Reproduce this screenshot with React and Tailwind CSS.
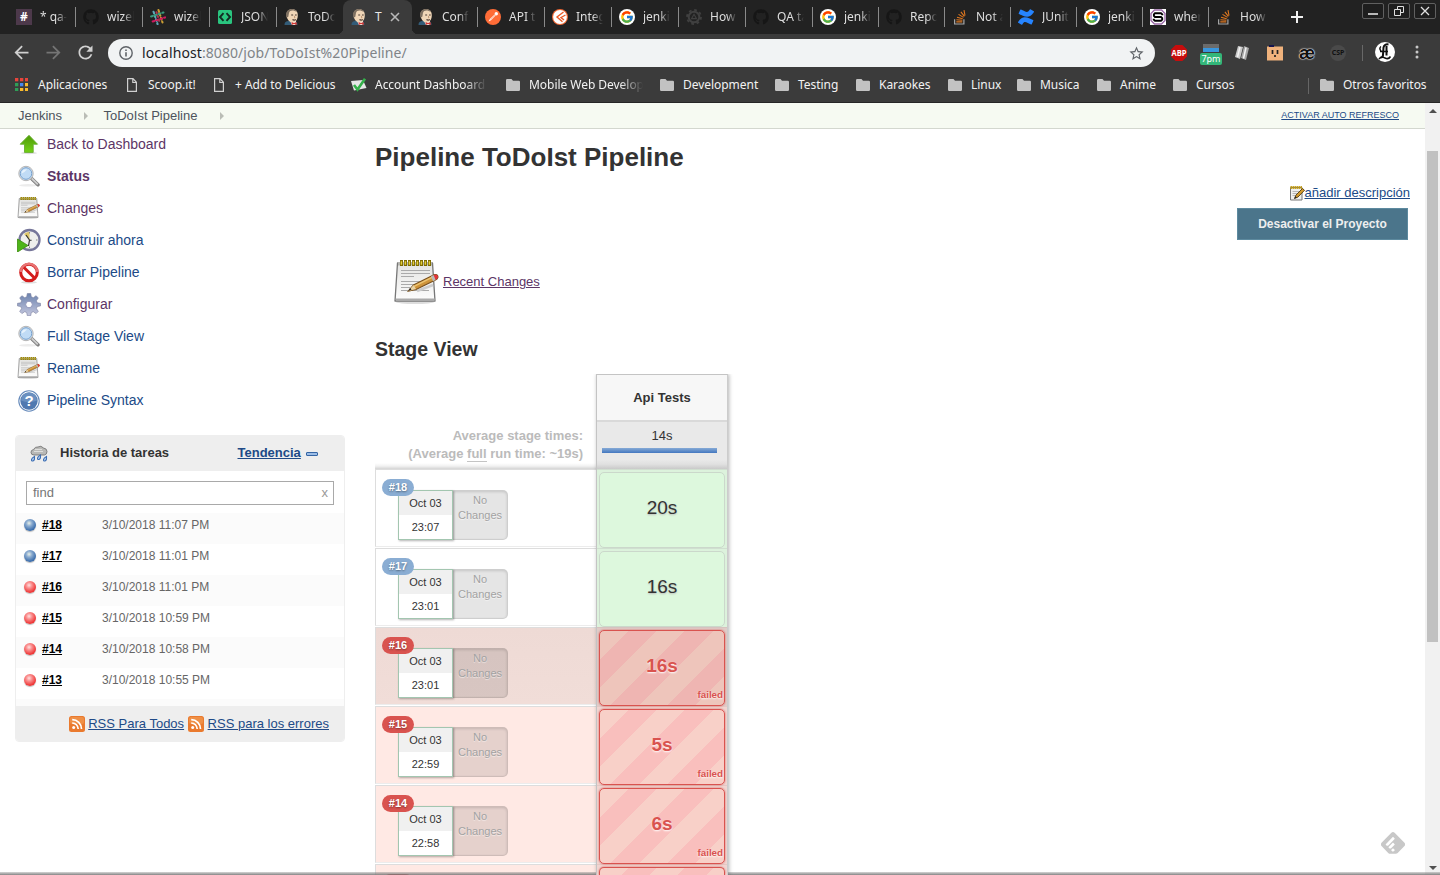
import React from "react";
import { FaGithub } from "react-icons/fa";
import { FcGoogle } from "react-icons/fc";
import { SiConfluence, SiFeedly } from "react-icons/si";

/* ---------- favicons ---------- */

const HashIcon = () => (
  <span className="flex size-4 items-center justify-center bg-[#4d394b] text-[12px] font-bold leading-4 text-white">#</span>
);

const GithubIcon = () => <FaGithub className="size-4 text-[#161616]" />;

const SlackIcon = () => (
  <svg viewBox="0 0 16 16" className="size-4">
    <g transform="rotate(-18 8 8)" strokeWidth="2.1" strokeLinecap="round" strokeDasharray="1.8 2.2">
      <path d="M5.4 1.6v13" stroke="#5aa9b8" />
      <path d="M10.6 1.6v13" stroke="#c99c33" />
      <path d="M1.6 5.400h13" stroke="#3a9b7c" />
      <path d="M1.6 10.600h13" stroke="#d01a5e" />
      <path d="M8 3v10" stroke="#a8374f" strokeDasharray="1 3" />
    </g>
  </svg>
);

const JsonIcon = () => (
  <svg viewBox="0 0 16 16" className="size-4">
    <rect x="1" y="1" width="14" height="14" rx="1.5" fill="#2ac57f" />
    <path d="M6.5 4.2L3 8l3.5 3.8M9.500 4.200L13 8l-3.500 3.800" stroke="#132a22" strokeWidth="1.900" fill="none" />
  </svg>
);

const JenkinsIcon = () => (
  <svg viewBox="0 0 16 16" className="size-4">
    <path d="M.5 16c0-3 1.500-4 4-4h6c2 0 3 1.500 3 4z" fill="#335c78" />
    <path d="M6 12l2 4h3.500l.5-4z" fill="#f4f1ea" />
    <path d="M2.500 5.500C2.500 2 5 .3 8.300.3c3.500 0 5.500 2.300 5.500 6 0 4-1.800 7.200-5.300 7.200C4.900 13.500 2.500 9.500 2.500 5.500z" fill="#f0d6b7" />
    <path d="M2.400 8.500C1.200 4 3.200.2 8 .1c2.400 0 4.300 1 5.200 3C10.800 1.500 8 .9 6.200 2 4.600 3 5 5.500 4.200 8z" fill="#7d6f60" />
    <path d="M7.200 6h1.900M11 6h1.700M8.500 10.500c1 .8 2.300.7 3.300 0" stroke="#4a3a32" strokeWidth="1.100" fill="none" />
    <path d="M10.200 6.800l.8 1.700-1 .3" stroke="#b88a66" strokeWidth=".8" fill="none" />
    <path d="M7.500 13l2.500 1 2.500-1 .4 3-2.900-1-2.200 1z" fill="#d33833" />
  </svg>
);

const PostmanIcon = () => (
  <svg viewBox="0 0 16 16" className="size-4">
    <circle cx="8" cy="8" r="8" fill="#ff6c37" />
    <path d="M3.500 12.600l1.400-2.700 4.700-4.400 1.100 1.100-4.600 4.600z" fill="#fff" />
    <circle cx="11.300" cy="4.700" r="1.700" fill="#fff" />
    <path d="M5.500 10.800l4.800-4.700" stroke="#ff6c37" strokeWidth=".6" />
  </svg>
);

const IntegIcon = () => (
  <svg viewBox="0 0 16 16" className="size-4">
    <circle cx="8" cy="8" r="8" fill="#f26a36" />
    <circle cx="8" cy="8" r="6.900" fill="#fff" />
    <path d="M11.500 3L5 8l5.500 4.800M13.500 6L9 8.500l3 2.500" stroke="#ee5a24" strokeWidth="1.400" fill="none" />
  </svg>
);

const GoogleIcon = () => (
  <span className="flex size-4 items-center justify-center rounded-full bg-white">
    <FcGoogle className="size-[14px]" />
  </span>
);

const GearTriangleIcon = () => (
  <svg viewBox="0 0 16 16" className="size-4" fill="none" stroke="#404040">
    <circle cx="8" cy="8" r="7" strokeWidth="1.800" strokeDasharray="2.700 2.798" />
    <circle cx="8" cy="8" r="5.300" strokeWidth="2" />
    <path d="M8 5.300l2.500 4.300h-5z" strokeWidth="1.100" />
  </svg>
);

const StackIcon = () => (
  <svg viewBox="0 0 16 16" className="size-4" fill="none">
    <path d="M2.600 10.200V15h9.300v-4.800" stroke="#a5a5a5" strokeWidth="1.200" />
    <path d="M4.300 12.900h6M4.400 10.700l6 .6M5 8.300l5.700 1.500M6.500 5.400l5 3M8.900 2.900l3.500 4.500M12 1.200l1 5.300" stroke="#e07820" strokeWidth="1.100" />
  </svg>
);

const ConfluenceIcon = () => <SiConfluence className="size-4 text-[#2684ff]" />;

const SIcon = () => (
  <svg viewBox="0 0 16 16" className="size-4">
    <rect width="16" height="16" fill="#fff" />
    <path d="M4.500 1h7L15 4.500v7L11.500 15h-7L1 11.500v-7z" fill="#fff" stroke="#9b6aa8" strokeWidth="1.400" />
    <path d="M12.300 6.300V5.500l-1.300-1.300H5L3.900 5.300v1.500L5 8h6l1.200 1.200v1.500L11 11.800H5l-1.300-1.300v-.8" fill="none" stroke="#000" strokeWidth="1.900" />
  </svg>
);

/* ---------- browser chrome ---------- */

const tabs = [
  { t: "* qa-c", I: HashIcon },
  { t: "wizeli", I: GithubIcon },
  { t: "wizeli", I: SlackIcon },
  { t: "JSON", I: JsonIcon },
  { t: "ToDo", I: JenkinsIcon, noSep: true },
  { t: "T", I: JenkinsIcon, active: true },
  { t: "Confi", I: JenkinsIcon },
  { t: "API te", I: PostmanIcon },
  { t: "Integ", I: IntegIcon },
  { t: "jenkin", I: GoogleIcon },
  { t: "How", I: GearTriangleIcon },
  { t: "QA ta", I: GithubIcon },
  { t: "jenkin", I: GoogleIcon, small: true },
  { t: "Repo", I: GithubIcon, small: true },
  { t: "Not a", I: StackIcon, small: true },
  { t: "JUnit", I: ConfluenceIcon, small: true },
  { t: "jenkin", I: GoogleIcon, small: true },
  { t: "wher", I: SIcon, small: true },
  { t: "How", I: StackIcon, small: true, noSep: true },
];

function Tab({ t, I, active, small, noSep }) {
  if (active)
    return (
      <div className="relative flex h-[34px] w-[67px] shrink-0 items-center pl-[7px]">
        <div className="absolute inset-y-0 -left-px w-[69px] rounded-t-[8px] bg-[#3b3b3b]" />
        <div className="absolute bottom-0 -left-[7px] size-[6px] bg-[radial-gradient(circle_at_0_0,#222_6px,#3b3b3b_6.5px)]" />
        <div className="absolute bottom-0 -right-[7px] size-[6px] bg-[radial-gradient(circle_at_100%_0,#222_6px,#3b3b3b_6.5px)]" />
        <div className="relative"><I /></div>
        <div className="relative ml-2 w-[8px] whitespace-nowrap text-[12px] text-[#e8e8e8]">{t}</div>
        <svg viewBox="0 0 10 10" className="relative ml-[7px] size-[10px]" stroke="#b8b8b8" strokeWidth="1.600">
          <path d="M1 1l8 8M9 1L1 9" />
        </svg>
      </div>
    );
  return (
    <div className={`flex h-[34px] shrink-0 items-center pl-[7px] ${small ? "w-[66px]" : "w-[67px]"}`}>
      <I />
      <div className="ml-2 w-[28px] overflow-hidden whitespace-nowrap text-[12px] text-[#dedede] [mask-image:linear-gradient(to_right,#000_60%,transparent_96%)]">{t}</div>
      {!noSep && <div className="ml-auto h-5 w-px bg-[#8a8a8a]" />}
    </div>
  );
}

const WinButton = ({ children }) => (
  <div className="flex h-[16px] w-[22px] items-center justify-center rounded-[2px] border border-[#606060] bg-[#1e1e1e]">
    <svg viewBox="0 0 12 12" className="size-3" fill="none" stroke="#e0e0e0" strokeWidth="1.300">{children}</svg>
  </div>
);

const TabStrip = () => (
  <div className="flex h-[34px] shrink-0 bg-[#222] pl-[9px]">
    {tabs.map((tab, i) => <Tab key={i} {...tab} />)}
    <svg viewBox="0 0 12 12" className="ml-[16px] mt-[11px] size-3" stroke="#f0f0f0" strokeWidth="2"><path d="M6 0v12M0 6h12" /></svg>
    <div className="ml-auto mr-[4px] mt-[3px] flex gap-[4px]">
      <WinButton><path d="M1 9h10" strokeWidth="1.600" /></WinButton>
      <WinButton><path d="M1.500 4.500h6v6h-6zM4.500 4.500v-3h6v6h-3" strokeWidth="1" /></WinButton>
      <WinButton><path d="M2 2l8 8M10 2l-8 8" /></WinButton>
    </div>
  </div>
);

const NavIcon = ({ d, dim }) => (
  <svg viewBox="0 0 24 24" className={`size-[21px] ${dim ? "text-[#757575]" : "text-[#d0d0d0]"}`} fill="currentColor"><path d={d} /></svg>
);

const Toolbar = () => (
  <div className="flex h-[33px] shrink-0 items-center bg-[#3b3b3b] pl-[11px] pt-[5px]">
    <div className="-mt-[2px] flex gap-[11px]">
      <NavIcon d="M20 11H7.830l5.590-5.590L12 4l-8 8 8 8 1.410-1.410L7.830 13H20v-2z" />
      <NavIcon dim d="M12 4l-1.410 1.410L16.170 11H4v2h12.170l-5.580 5.590L12 20l8-8z" />
      <NavIcon d="M17.650 6.350C16.200 4.900 14.210 4 12 4c-4.420 0-7.990 3.580-7.990 8s3.570 8 7.990 8c3.730 0 6.840-2.550 7.730-6h-2.080c-.82 2.330-3.040 4-5.650 4-3.310 0-6-2.690-6-6s2.690-6 6-6c1.660 0 3.140.69 4.220 1.780L13 11h7V4l-2.350 2.350z" />
    </div>
    <div className="ml-[12px] flex h-[28px] w-[1047px] shrink-0 items-center rounded-full bg-[#f1f3f4] pl-[11px] pr-[10px]">
      <svg viewBox="0 0 14 14" className="size-[14px]" fill="none" stroke="#5f6368" strokeWidth="1.400">
        <circle cx="7" cy="7" r="6.200" /><path d="M7 6.200v4.300M7 3.500v1.500" strokeWidth="1.600" />
      </svg>
      <div className="ml-[9px] -mt-px whitespace-nowrap text-[14px] tracking-[0.08px] text-[#808488]"><span className="text-[#202124]">localhost</span>:8080/job/ToDoIst%20Pipeline/</div>
      <svg viewBox="0 0 24 24" className="ml-auto size-[17px]" fill="#5f6368">
        <path d="M22 9.240l-7.190-.62L12 2 9.190 8.630 2 9.240l5.460 4.730L5.820 21 12 17.270 18.180 21l-1.630-7.030L22 9.240zM12 15.400l-3.760 2.270 1-4.280-3.320-2.880 4.380-.38L12 6.100l1.710 4.040 4.380.38-3.320 2.880 1 4.280L12 15.400z" />
      </svg>
    </div>
    <div className="ml-[15px] flex h-full items-center">
      <svg viewBox="0 0 18 18" className="size-[18px]">
        <path d="M5.600 1h6.800L17 5.600v6.800L12.400 17H5.600L1 12.400V5.600z" fill="#c70d0d" />
        <text x="9" y="12" fontSize="8" fontWeight="bold" fill="#fff" textAnchor="middle" fontFamily="Open Sans" textLength="15" lengthAdjust="spacingAndGlyphs">ABP</text>
      </svg>
      <div className="ml-[12px] mt-[3px] flex w-[22px] flex-col items-center">
        <div className="h-[4px] w-4 bg-[#6b6b6b]" />
        <div className="h-[4px] w-4 bg-[#3a96dd]" />
        <div className="mt-px h-[12px] w-[22px] rounded-[2px] bg-[#33b679] text-center text-[9px] leading-[12px] text-white">7pm</div>
      </div>
      <svg viewBox="0 0 16 16" className="ml-[12px] size-[16px]">
        <path d="M4 1l5 1-3 12-5-2z" fill="#c9c9c9" /><path d="M10 1l5 2-3 12-5-2z" fill="#a5a5a5" /><path d="M6 2L3.500 12M12 2.500l-2.500 11" stroke="#f2f2f2" strokeWidth="1.500" />
      </svg>
      <svg viewBox="0 0 16 16" className="ml-[17px] size-[16px]">
        <rect y="1.500" width="16" height="14" fill="#f0b27c" /><path d="M2 0h5v2H2z" fill="#15154f" /><path d="M5.500 5v4M10.500 5v4M8 10v2" stroke="#222" strokeWidth="1.700" />
      </svg>
      <div className="ml-[14px] w-[20px] text-center font-['Liberation_Sans'] text-[18px] font-bold leading-[20px] text-[#111] [text-shadow:0_0_1px_#fff,0_0_1px_#fff,0_0_2px_#fff]">æ</div>
      <div className="ml-[13px] flex size-[16px] items-center justify-center rounded-full bg-[#4a4a4a] text-[7px] font-bold text-[#111]">CSP</div>
      <div className="ml-[16px] h-[16px] w-px bg-[#686868]" />
      <svg viewBox="0 0 20 20" className="ml-[12px] -mt-[2px] size-[20px]">
        <circle cx="10" cy="10" r="10" fill="#fff" />
        <path d="M13.500 2.500C11 2 9 3 8.500 5.500L8 13c0 1.500-1 2.500-2.500 2.500M11.500 4v9.500" stroke="#111" strokeWidth="2" fill="none" />
        <path d="M4 17c2-3 4-2 6-1s4 1 5.500-1.500M6 4.500c-1.500 1-1.500 3 0 4.500M5 9.500h8" stroke="#111" strokeWidth="1.500" fill="none" />
      </svg>
      <svg viewBox="0 0 4 14" className="ml-[20px] h-[14px] w-1 -mt-[2px]" fill="#c8c8c8"><circle cx="2" cy="2" r="1.500" /><circle cx="2" cy="7" r="1.500" /><circle cx="2" cy="12" r="1.500" /></svg>
    </div>
  </div>
);

const AppsIcon = () => (
  <svg viewBox="0 0 13 13" className="mr-[10px] size-[13px] shrink-0">
    {[["#e8453c", 0, 0], ["#e8453c", 5, 0], ["#e8453c", 10, 0], ["#2f9e57", 0, 5], ["#4688f1", 5, 5], ["#f9bb2d", 10, 5], ["#2f9e57", 0, 10], ["#f9bb2d", 5, 10], ["#f9bb2d", 10, 10]].map(([c, x, y]) => (
      <rect key={`${x}-${y}`} x={x} y={y} width="3.300" height="3.300" fill={c} />
    ))}
  </svg>
);
const PageIcon = () => (
  <svg viewBox="0 0 10 14" className="mr-[11px] h-[14px] w-[10px] shrink-0" fill="none" stroke="#d0d0d0" strokeWidth="1.200">
    <path d="M.6.600h5.400l3.400 3.700v9.100H.600zM5.800.600v3.900h3.600" />
  </svg>
);
const FolderIcon = () => (
  <svg viewBox="0 0 14 12" className="mr-[9px] h-3 w-[14px] shrink-0" fill="#c2c2c2"><path d="M1.200 0h4.300L7 1.700h5.800Q14 1.700 14 2.900v7.900Q14 12 12.800 12H1.200Q0 12 0 10.800V1.200Q0 0 1.200 0z" /></svg>
);
const CheckIcon = () => (
  <svg viewBox="0 0 16 14" className="mr-[8px] h-[14px] w-4 shrink-0">
    <path d="M0 3l12-1 3.500 8L3 12.500z" fill="#e6e6e6" /><path d="M3 7l3.500 4.500L14 .8" stroke="#34b04a" strokeWidth="2.600" fill="none" />
  </svg>
);

const bookmarks = [
  { t: "Aplicaciones", I: AppsIcon, w: "w-[112px]" },
  { t: "Scoop.it!", I: PageIcon, w: "w-[87px]" },
  { t: "+ Add to Delicious", I: PageIcon, w: "w-[137px]" },
  { t: "Account Dashboard", I: CheckIcon, w: "w-[155px]", fade: "w-[112px]" },
  { t: "Mobile Web Develop", I: FolderIcon, w: "w-[154px]", fade: "w-[114px]" },
  { t: "Development", I: FolderIcon, w: "w-[115px]" },
  { t: "Testing", I: FolderIcon, w: "w-[81px]" },
  { t: "Karaokes", I: FolderIcon, w: "w-[92px]" },
  { t: "Linux", I: FolderIcon, w: "w-[69px]" },
  { t: "Musica", I: FolderIcon, w: "w-[80px]" },
  { t: "Anime", I: FolderIcon, w: "w-[76px]" },
  { t: "Cursos", I: FolderIcon, w: "w-[80px]" },
];

const BookmarksBar = () => (
  <div className="flex h-[36px] shrink-0 items-center border-b border-[#262626] bg-[#3b3b3b] pl-[15px] text-[12px] tracking-[-0.04px] text-[#f2f2f2]">
    {bookmarks.map(({ t, I, w, fade }) => (
      <div key={t} className={`flex shrink-0 items-center whitespace-nowrap ${w}`}>
        <I />
        <span className={fade ? `overflow-hidden [mask-image:linear-gradient(to_right,#000_80%,transparent)] ${fade}` : ""}>{t}</span>
      </div>
    ))}
    <div className="ml-[55px] mt-[3px] h-4 w-px bg-[#666]" />
    <div className="ml-[11px] flex items-center whitespace-nowrap"><FolderIcon />Otros favoritos</div>
  </div>
);

/* ---------- Jenkins icons ---------- */

const UpIcon = () => (
  <svg viewBox="0 0 24 24" className="size-6">
    <defs><linearGradient id="up" x1="0" y1="0" x2="0" y2="1"><stop offset="0" stopColor="#4e9a06" /><stop offset="1" stopColor="#73d216" /></linearGradient></defs>
    <ellipse cx="12" cy="21" rx="8" ry="1.200" fill="#ddd" />
    <path d="M12 3.300l8.500 8.900h-4.300v8.200H7.500v-8.200H3.200z" fill="url(#up)" stroke="#65ad2d" strokeWidth=".9" />
  </svg>
);
const SearchIcon = () => (
  <svg viewBox="0 0 24 24" className="size-6">
    <ellipse cx="11" cy="21.300" rx="9" ry="1.300" fill="#ececec" />
    <path d="M14.500 14.500l6.500 6.200" stroke="#808080" strokeWidth="3.600" strokeLinecap="round" />
    <path d="M14.800 14.500l6 5.800" stroke="#cdcdcd" strokeWidth="1.800" />
    <circle cx="9" cy="9.500" r="7.200" fill="#e2e8ee" stroke="#b5b5b5" strokeWidth="1" />
    <circle cx="9" cy="9.500" r="5.800" fill="#c0dbf5" stroke="#739fcd" strokeWidth="1" />
    <path d="M4.500 9.500c0-3 2.500-4.500 5.500-4.300C8 7.500 7 8.500 4.500 9.500z" fill="#e6f2fc" />
  </svg>
);
const NotepadIcon = ({ className = "size-6" }) => (
  <svg viewBox="0 0 48 48" className={className}>
    <defs><linearGradient id="pad" x1="0" y1="0" x2="0" y2="1"><stop offset="0" stopColor="#e4e4e2" /><stop offset="1" stopColor="#fdfdfd" /></linearGradient></defs>
    <ellipse cx="22" cy="44" rx="19" ry="2" fill="#ddd" />
    <path d="M4.500 5h35l2.500 38H2z" fill="url(#pad)" stroke="#777" strokeWidth="1.300" strokeLinejoin="round" />
    <path d="M3 40.500h38.500v2.500H3z" fill="#aaa" />
    <path d="M5 4h34v3.500H5z" fill="#b5b5b0" />
    <path d="M7 5h32" stroke="#7c6a00" strokeWidth="5.800" strokeDasharray="3 1" />
    <path d="M7.700 5h31" stroke="#e5ce3d" strokeWidth="3.600" strokeDasharray="1.400 2.600" />
    <path d="M8 12.500h29M8 15.500h29M8 18.500h13M8 23.500h28M8 26.500h20M8 29.500h9M8 32.500h28" stroke="#aaa" strokeWidth="1.100" />
    <path d="M24 33l16-6" stroke="#ccc" strokeWidth="2.500" />
    <path d="M15.500 33l5-6L41 16.800q3.500-1 4 2.200-.5 2-2.500 3L23 31.500z" fill="#cf943a" stroke="#7a5220" strokeWidth="1.200" />
    <path d="M21 28.300L40 18.800" stroke="#edc572" strokeWidth="1.300" />
    <path d="M15.500 33l5-6 2.500 4z" fill="#e9d3a4" /><path d="M15.500 33l3-1.500-1.500-1.500z" fill="#222" />
    <path d="M40.500 17q4-1.500 4.500 2-.5 2-2.500 3z" fill="#e4333a" /><path d="M38 18.300l2.500-1.300 2 5-2.500 1.200z" fill="#b9b9b9" />
  </svg>
);
const EditIcon = () => (
  <svg viewBox="0 0 16 16" className="size-4">
    <path d="M1.500 2.500h11.500v12.500H1.500z" fill="#efefed" stroke="#777" />
    <path d="M1.500 2.500h11.500" stroke="#c19a10" strokeWidth="3.200" strokeDasharray="1.400 .6" />
    <path d="M3.500 6.500h7M3.500 8.500h5M3.500 10.500h3" stroke="#aaa" strokeWidth=".8" />
    <path d="M5.500 13.500l1.500-3.500 6.500-6.500 2 1.800L9 12z" fill="#d49b2e" stroke="#503a10" strokeWidth=".9" />
    <path d="M5.300 13.800l1-2.500 1.600 1.300z" fill="#222" />
  </svg>
);
const ClockIcon = () => (
  <svg viewBox="0 0 24 24" className="size-6">
    <circle cx="12.500" cy="12" r="10" fill="#efefec" stroke="#77779a" strokeWidth="2.300" />
    <path d="M12.500 12L7 6Q9 4 12.500 3.800z" fill="#dfc76b" />
    <path d="M12.500 12l-3.500-5M12.500 12l-1 6M12.500 12l2 .3" stroke="#333" strokeWidth="1.200" />
    <path d="M12.500 4v1.500M12.500 18.500V20M19 12h1.500" stroke="#888" />
    <path d="M.5 11v13L11 17.500z" fill="#4eb51a" stroke="#3b8b0c" strokeWidth=".8" />
  </svg>
);
const StopIcon = () => (
  <svg viewBox="0 0 24 24" className="size-6">
    <ellipse cx="12" cy="22.300" rx="8" ry="1.200" fill="#ddd" />
    <circle cx="12" cy="12.500" r="8.300" fill="#fff" stroke="#d41c1c" strokeWidth="3" />
    <path d="M6.500 7l11 11" stroke="#d41c1c" strokeWidth="3" />
    <path d="M3.700 12a8.300 8.300 0 0 1 16.600 0" stroke="#e87474" strokeWidth="2.400" fill="none" />
  </svg>
);
const GearIcon = () => (
  <svg viewBox="0 0 24 24" className="size-6">
    <defs><linearGradient id="gear" x1="0" y1="0" x2="0" y2="1"><stop offset="0" stopColor="#6c83ae" /><stop offset="1" stopColor="#c5c7de" /></linearGradient></defs>
    <path transform="translate(0 .5)" fill="url(#gear)" stroke="#7a7fa0" strokeWidth=".6" d="M10.300 1h3.400l.6 3.300 2 .9 2.800-2 2.200 2.300-1.900 2.800.8 2 3.300.5v2.600l-3.300.7-.8 2 1.900 2.800-2.200 2.200-2.800-1.900-2 .8-.6 3.200h-3.400l-.6-3.200-2-.8-2.800 1.900-2.200-2.200 1.900-2.800-.8-2L.5 13.400v-2.600l3.300-.5.8-2-1.900-2.800 2.200-2.300 2.800 2 2-.9z" />
    <circle cx="12" cy="12.500" r="3.300" fill="#fff" stroke="#8a8fb5" strokeWidth=".9" />
  </svg>
);
const HelpIcon = () => (
  <svg viewBox="0 0 24 24" className="size-6">
    <circle cx="12" cy="13" r="10.200" fill="#fff" stroke="#6489ba" strokeWidth="1.100" />
    <circle cx="12" cy="13" r="8.700" fill="#5079b0" />
    <path d="M4 12.500a8 8 0 0 1 16 0q-8 3-16 0z" fill="#7ba0cc" opacity=".6" />
    <text x="12" y="18.300" fontSize="15" fontWeight="bold" fontFamily="Liberation Sans" textAnchor="middle" fill="#fff">?</text>
  </svg>
);
const RainIcon = () => (
  <svg viewBox="0 0 18 18" className="size-[18px]">
    <path d="M4 10Q1 10 1 7.300 1 5 3.500 4.500 5 1.500 8 2q3-2 5.500 1 3.500.5 3.500 3.500T14.500 10z" fill="#b9b9b7" stroke="#777" strokeWidth=".9" />
    <path d="M5 4.500h7M4 6.500h9" stroke="#dededc" />
    <path d="M4.500 11.500c-4 2-3.500 5-1.500 4.500s1.500-2 1.500-4.500zM10.500 10c-4 2-3.500 5-1.500 4.500s1.500-2 1.500-4.500zM16.500 11.500c-4 2-3.500 5-1.500 4.500s1.500-2 1.500-4.500z" fill="#b9d0ee" stroke="#3c6eb4" strokeWidth="1.100" />
  </svg>
);
const RssIcon = () => (
  <svg viewBox="0 0 16 16" className="size-4">
    <rect width="16" height="16" rx="2.500" fill="#ea7a2e" /><rect x="1" y="1" width="14" height="7" rx="2" fill="#f19a52" opacity=".7" />
    <circle cx="4.700" cy="11.500" r="1.500" fill="#fff" /><path d="M3.200 7a6 6 0 0 1 6 6M3.200 3.700a9.300 9.300 0 0 1 9.300 9.300" stroke="#fff" strokeWidth="1.700" fill="none" />
  </svg>
);
const BallIcon = ({ blue }) => (
  <span className={`size-3 rounded-full shadow-[0_1px_1px_#bbb] ${blue ? "bg-[radial-gradient(circle_at_42%_35%,#e8f0e8_0%,#8cacd0_28%,#3a6cab_70%,#33588d_100%)]" : "bg-[radial-gradient(circle_at_42%_35%,#ffe0e0_0%,#fa8f8f_28%,#ee3434_70%,#cf4a4a_100%)]"}`} />
);

/* ---------- page ---------- */

const CrumbArrow = () => <svg viewBox="0 0 4 8" className="h-2 w-1" fill="#babdb6"><path d="M0 0l4 4-4 4z" /></svg>;

const Breadcrumbs = () => (
  <div className="flex h-[26px] shrink-0 items-center border-b border-[#d3d7cf] bg-[#f6faf2] pl-[18px] pr-[26px] text-[13px] text-[#4d545d]">
    <span className="w-[66px]">Jenkins</span><CrumbArrow />
    <span className="ml-[15.500px] w-[116.500px]">ToDoIst Pipeline</span><CrumbArrow />
    <a className="ml-auto mt-px text-[9px] text-[#204a87] underline">ACTIVAR AUTO REFRESCO</a>
  </div>
);

const tasks = [
  { t: "Back to Dashboard", I: UpIcon, c: "text-[#5c3566]" },
  { t: "Status", I: SearchIcon, c: "text-[#5c3566] font-bold" },
  { t: "Changes", I: NotepadIcon, c: "text-[#5c3566]" },
  { t: "Construir ahora", I: ClockIcon, c: "text-[#204a87]" },
  { t: "Borrar Pipeline", I: StopIcon, c: "text-[#204a87]" },
  { t: "Configurar", I: GearIcon, c: "text-[#5c3566]" },
  { t: "Full Stage View", I: SearchIcon, c: "text-[#204a87]" },
  { t: "Rename", I: NotepadIcon, c: "text-[#204a87]" },
  { t: "Pipeline Syntax", I: HelpIcon, c: "text-[#204a87]" },
];

const builds = [
  ["#18", "3/10/2018 11:07 PM", true],
  ["#17", "3/10/2018 11:01 PM", true],
  ["#16", "3/10/2018 11:01 PM", false],
  ["#15", "3/10/2018 10:59 PM", false],
  ["#14", "3/10/2018 10:58 PM", false],
  ["#13", "3/10/2018 10:55 PM", false],
];

const Sidebar = () => (
  <div className="w-[375px] shrink-0 pl-[15px]">
    <div className="pl-[2px]">
      {tasks.map(({ t, I, c }) => (
        <div key={t} className="flex h-8 items-center">
          <div className="-mt-[2px]"><I /></div><span className={`-mt-[2px] ml-[6px] text-[14px] ${c}`}>{t}</span>
        </div>
      ))}
    </div>
    <div className="mt-[18px] w-[330px] overflow-hidden rounded-[4px] border border-[#eee] text-[13px]">
      <div className="flex h-[35px] items-center bg-[#eee] pl-[14px]">
        <div><RainIcon /></div>
        <span className="-mt-[2px] ml-[12px] w-[177.500px] font-bold text-[#333]">Historia de tareas</span>
        <a className="-mt-[2px] font-bold text-[#204a87] underline">Tendencia</a>
        <div className="ml-[5px] h-[4px] w-3 rounded-[1px] border border-[#3465a4] bg-[#9cbde6]" />
      </div>
      <div className="mx-[10px] mb-[8px] mt-[10px] flex h-6 items-center justify-between border border-[#a9a9a9] px-[6px] text-[#767676]">
        <span className="-mt-px">find</span><span className="-mr-px text-[#999]">x</span>
      </div>
      {builds.map(([n, d, blue], i) => (
        <div key={n} className={`flex h-[31px] pl-[8px] text-[12px] leading-[18px] ${i % 2 ? "bg-white" : "bg-[#fbfbfb]"}`}>
          <div className="flex h-[24px] w-[18px] items-center"><BallIcon blue={blue} /></div>
          <a className="mt-[3px] w-[60px] font-bold text-black underline">{n}</a>
          <span className="mt-[3px] text-[#666]">{d}</span>
        </div>
      ))}
      <div className="h-[7px] bg-[#fbfbfb]" />
      <div className="flex h-[35px] items-center justify-end bg-[#eee] pr-[15px] text-[#204a87]">
        <RssIcon /><a className="ml-[3.500px] underline">RSS Para Todos</a>
        <span className="ml-[3.500px]"><RssIcon /></span><a className="ml-[4px] underline">RSS para los errores</a>
      </div>
    </div>
  </div>
);

const runs = [
  { n: "#18", time: "23:07", dur: "20s", ok: true },
  { n: "#17", time: "23:01", dur: "16s", ok: true },
  { n: "#16", time: "23:01", dur: "16s", hover: true },
  { n: "#15", time: "22:59", dur: "5s" },
  { n: "#14", time: "22:58", dur: "6s" },
];

function RunInfo({ n, time, ok, hover }) {
  const bg = ok ? "bg-white" : hover ? "bg-[linear-gradient(#eedad5,#f1ddd8)]" : "bg-[#ffe9e4]";
  return (
    <div className="h-[79px] pb-px">
      <div className={`relative h-[78px] border-b border-l border-t border-[#ddd] border-b-[#ececec] pl-[22px] pt-[20px] text-[11px] ${bg}`}>
        <div className="flex h-[50px]">
          <div className="z-[1] h-[50px] w-[55px] border border-[#a3c6b0] bg-white text-center leading-[24px] text-[#333] shadow-[1px_1px_2px_rgba(0,0,0,0.3)]">
            <div className="h-6 bg-[#f0f0f0]">Oct 03</div>
            <div className="h-6">{time}</div>
          </div>
          <div className="h-[50px] w-[55px] rounded-r-[5px] border border-l-0 border-black/10 bg-black/10 pt-[2px] text-center leading-[15px] text-[#a2a2a2] shadow-[inset_0_1px_3px_rgba(0,0,0,0.15)] [text-shadow:0_1px_1px_#fff9]">
            No<br />Changes
          </div>
        </div>
        <div className={`absolute left-[6px] top-[9px] z-[2] h-[17px] w-8 rounded-full text-center font-bold leading-[17px] text-white [text-shadow:0_1px_2px_rgba(0,0,0,0.4)] ${ok ? "bg-[#8aadd3]" : "bg-[#d9534f]"}`}>{n}</div>
      </div>
    </div>
  );
}

function StageCell({ dur, ok, hover }) {
  if (ok)
    return (
      <div className="h-[79px] border-t border-[#d0dfd0] bg-[#dcf2dc] px-[2px] pt-[2px]">
        <div className="flex h-[76px] items-center justify-center rounded-[5px] border border-[#cbd8cb] bg-[#ddf8dd] pb-[3px] text-[19px] text-[#333] [text-shadow:0_1px_2px_#bbb]">{dur}</div>
      </div>
    );
  return (
    <div className={`h-[79px] border-t px-[2px] pt-[2px] ${hover ? "border-[#d6c3bf] bg-[#dfccc8]" : "border-[#e4c8c4] bg-[#f0d5d1]"}`}>
      <div className={`relative flex h-[76px] items-center justify-center rounded-[5px] border border-[#d9534f] pb-[3px] text-[19px] font-bold text-[#d9534f] shadow-[0_0_2px_#d9534f] [text-shadow:0_1px_2px_#fff] ${hover ? "bg-[repeating-linear-gradient(135deg,#eec5bb_0px,#eec5bb_20px,#efb5b2_20px,#efb5b2_40px)]" : "bg-[repeating-linear-gradient(135deg,#f8d0c8_0px,#f8d0c8_20px,#f9bfbd_20px,#f9bfbd_40px)]"}`}>
        {dur}
        <span className="absolute bottom-[4px] right-px text-[9.750px] leading-[12px]">failed</span>
      </div>
    </div>
  );
}

const StageView = () => (
  <div className="flex h-[501px] overflow-hidden">
    <div className="w-[221px]">
      <div className="h-[95px] bg-[linear-gradient(to_top,#d4d4d4_0px,#f2f2f2_3px,#fff_6px)] pr-[13px] pt-[53px] text-right text-[13px] font-bold leading-[18px] text-[#bbb]">
        Average stage times:<br />(Average <span className="border-b border-[#c4c4c4] leading-none">full</span> run time: ~19s)
      </div>
      {runs.map((r) => <RunInfo key={r.n} {...r} />)}
      <div className="relative h-[11px] border-l border-t border-[#ddd] bg-[#ffe9e4]">
        <div className="absolute left-[6px] top-[9px] h-[17px] w-8 rounded-full bg-[#d9534f]" />
      </div>
    </div>
    <div className="z-[1] mr-4 w-[132px] border border-b-0 border-[#c4c4c4] border-r-[#ccc] shadow-[1px_0_4px_rgba(0,0,0,0.3)]">
      <div className="flex h-[45px] items-center justify-center bg-[#f7f7f7] text-[13px] font-bold text-[#333]">Api Tests</div>
      <div className="h-[49px] border-t-2 border-[#d9d9d9] bg-[linear-gradient(#e9e9e9_80%,#e0e0e0_90%,#c9c9c9)] pt-[5px] text-center text-[13px] leading-[18px] text-[#333]">
        14s
        <div className="ml-[5px] mt-[3px] h-[5px] w-[115px] bg-[linear-gradient(#86aad6,#4377bf)]" />
      </div>
      {runs.map((r) => <StageCell key={r.n} {...r} />)}
      <div className="h-[11px] border-t border-[#e4c8c4] bg-[#f0d5d1] px-[2px] pt-[2px]">
        <div className="h-[8px] rounded-t-[5px] border border-b-0 border-[#d9534f] bg-[repeating-linear-gradient(135deg,#f8d0c8_0px,#f8d0c8_20px,#f9bfbd_20px,#f9bfbd_40px)] shadow-[0_0_2px_#d9534f]" />
      </div>
    </div>
  </div>
);

const Main = () => (
  <div className="w-[1050px]">
    <h1 className="flex h-[56px] items-center text-[26px] font-bold text-[#333]">Pipeline ToDoIst Pipeline</h1>
    <div className="flex h-4 items-center justify-end pr-[15px] text-[13px] text-[#204a87]">
      <EditIcon /><a className="-ml-px underline">añadir descripción</a>
    </div>
    <div className="mt-[7px] flex justify-end pr-[17px]">
      <button className="h-8 w-[171px] border border-[#5d8a9f] bg-[#4b758b] text-[12px] font-bold text-[#eee]">Desactivar el Proyecto</button>
    </div>
    <div className="mt-[18px] flex h-12 items-center pl-[17.500px] text-[13px]">
      <NotepadIcon className="size-12" /><a className="ml-[2.500px] text-[#5c3566] underline">Recent Changes</a>
    </div>
    <h2 className="mb-[10px] mt-[30px] flex h-7 items-center text-[19.500px] font-bold text-[#333]">Stage View</h2>
    <StageView />
  </div>
);

const Scrollbar = () => (
  <div className="flex w-[15px] shrink-0 flex-col items-center bg-[#f1f1f1] pb-[5px] pt-[6px]">
    <svg viewBox="0 0 8 4" className="h-1 w-2" fill="#505050"><path d="M0 4l4-4 4 4z" /></svg>
    <div className="mt-[38px] h-[491px] w-[11px] bg-[#c1c1c1]" />
    <svg viewBox="0 0 8 4" className="mt-auto h-1 w-2" fill="#505050"><path d="M0 0l4 4 4-4z" /></svg>
  </div>
);

export default function App() {
  return (
    <div className="relative flex h-[875px] w-[1440px] flex-col overflow-hidden bg-white font-['Noto_Sans',sans-serif]">
      <TabStrip />
      <Toolbar />
      <BookmarksBar />
      <div className="flex h-[772px] font-['Liberation_Sans',Arial,sans-serif]">
        <div className="flex w-[1425px] flex-col">
          <Breadcrumbs />
          <div className="flex h-[746px]">
            <Sidebar />
            <Main />
          </div>
        </div>
        <Scrollbar />
      </div>
      <SiFeedly className="absolute bottom-[20px] right-[35px] size-6 text-[#c8c8c8]" />
      <div className="absolute bottom-0 left-0 h-[3px] w-full bg-[linear-gradient(rgba(120,120,120,0.3),rgba(120,120,120,0.9))]" />
    </div>
  );
}
